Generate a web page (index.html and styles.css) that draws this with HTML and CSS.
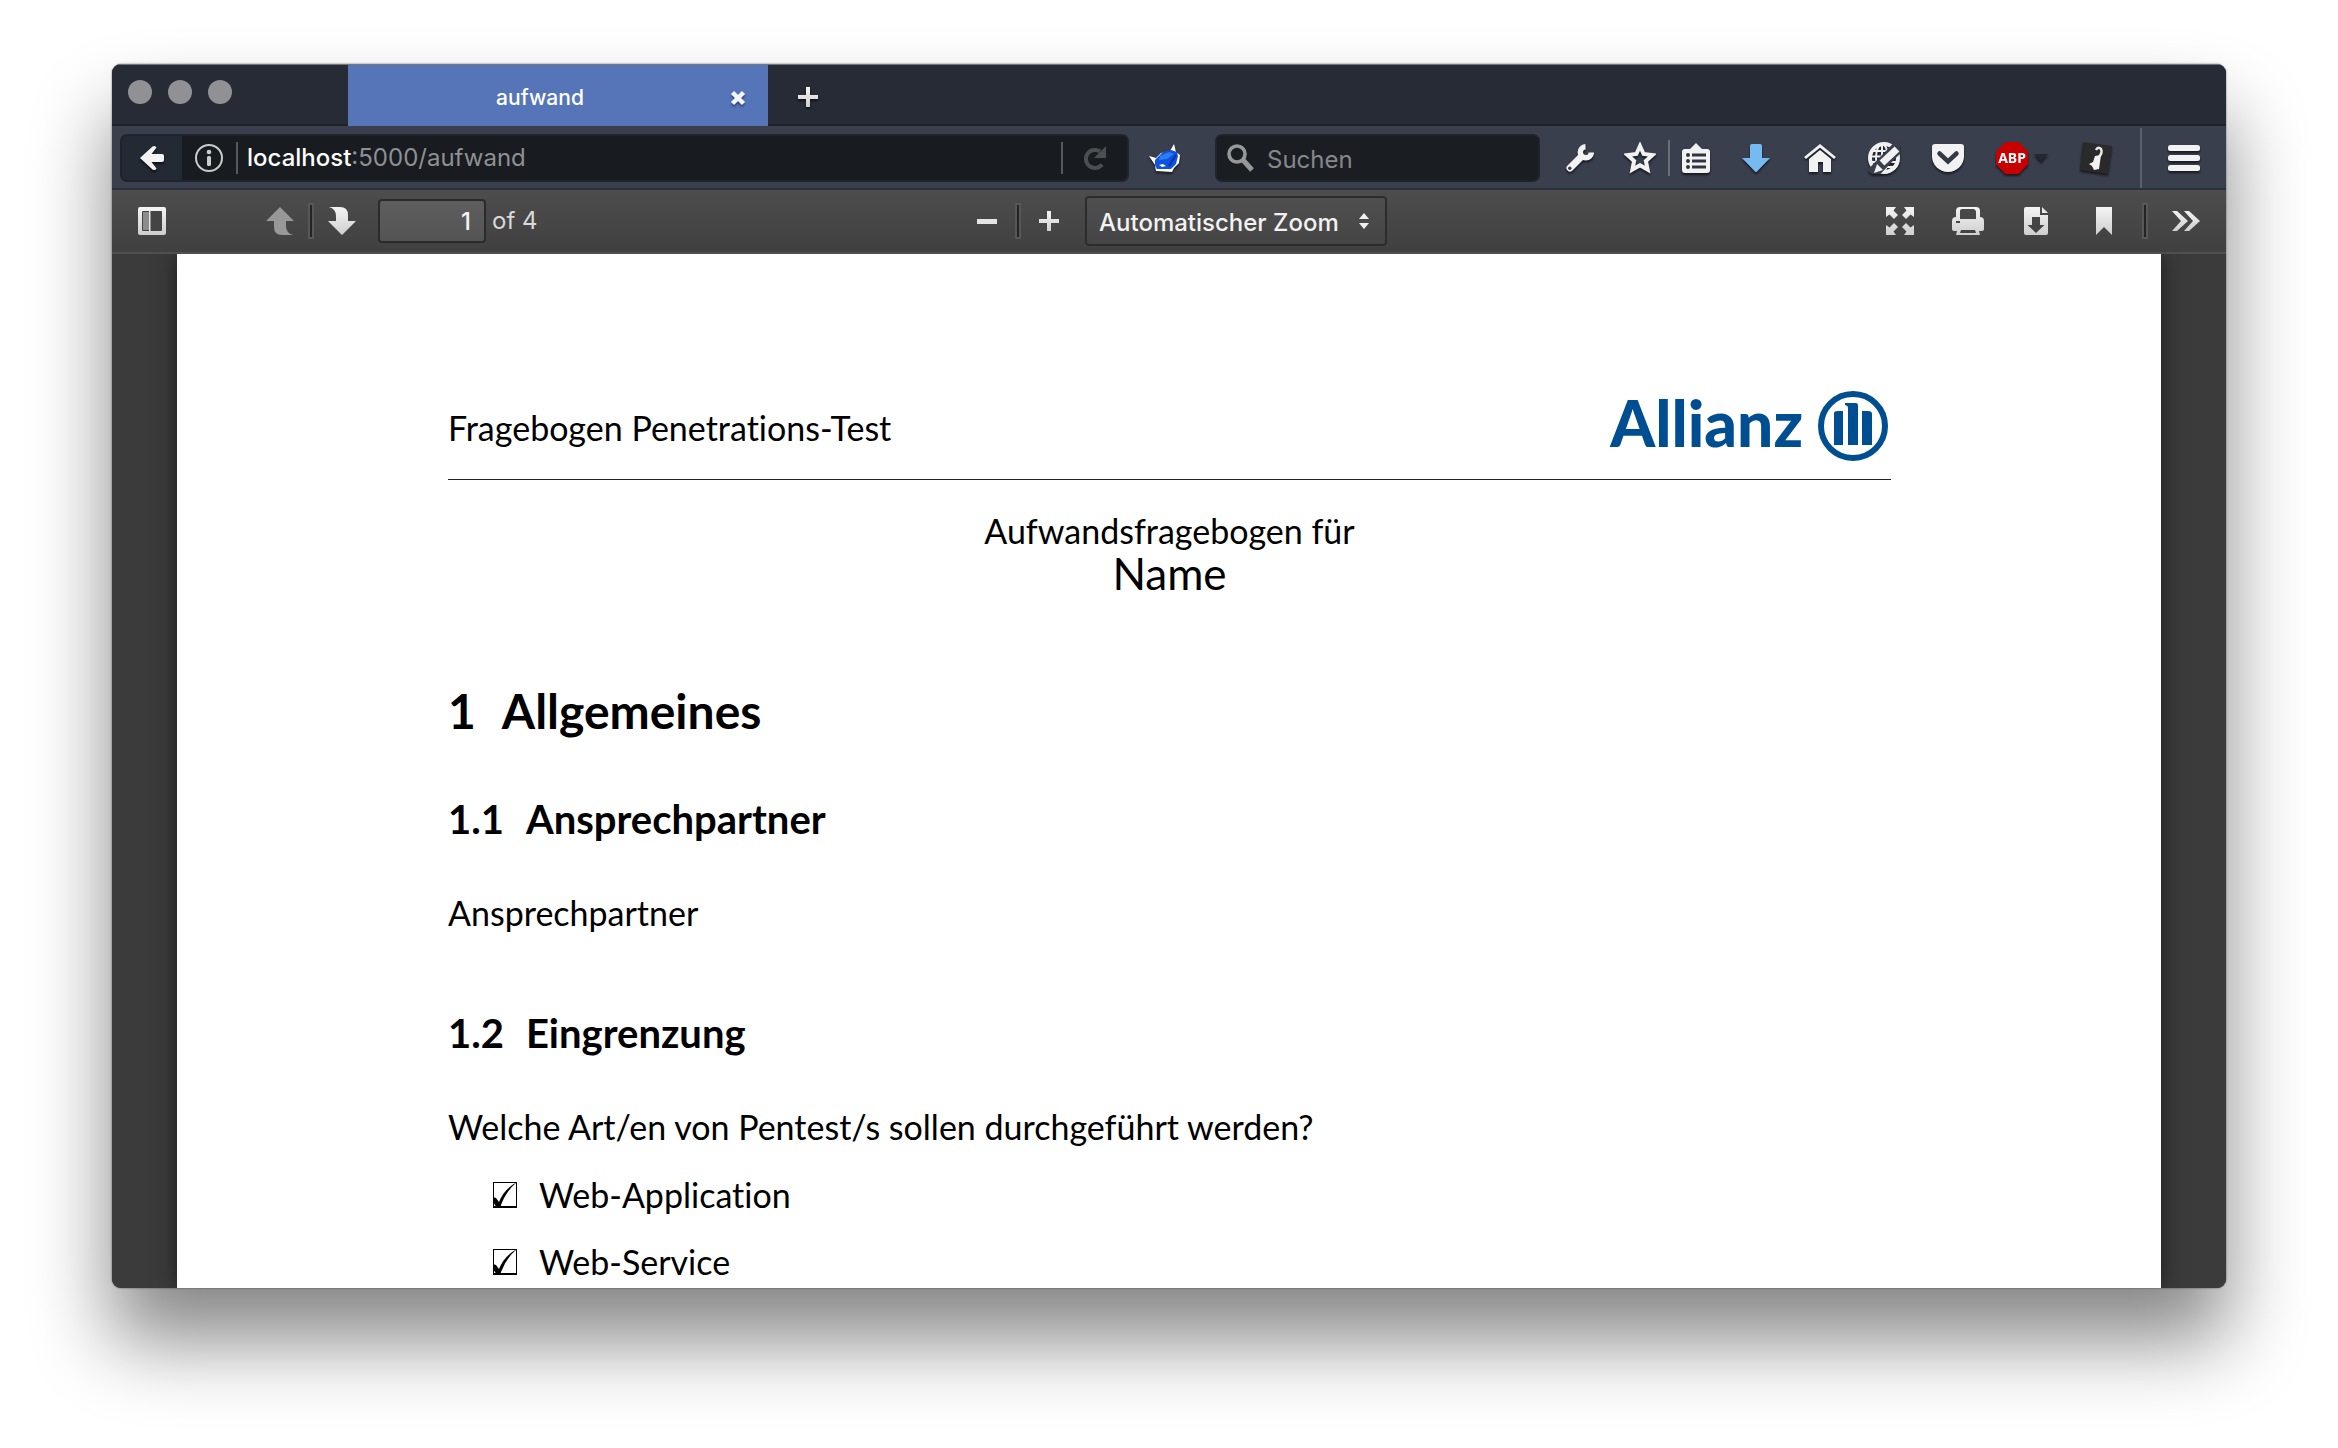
FILE: index.html
```html
<!DOCTYPE html>
<html lang="de">
<head>
<meta charset="utf-8">
<meta name="viewport" content="width=device-width, initial-scale=1">
<title>aufwand</title>
<link rel="stylesheet" href="styles.css">
</head>
<body>
<svg class="defs" width="0" height="0" aria-hidden="true">
  <defs>
    <linearGradient id="light" x1="0" y1="0" x2="0" y2="1"><stop offset="0" stop-color="#f4f4f4"/><stop offset="1" stop-color="#cfcfcf"/></linearGradient>
  </defs>
</svg>
<div class="window">
  <header class="tabbar">
    <div class="lights"><span class="light"></span><span class="light"></span><span class="light"></span></div>
    <div class="tab">
      <span class="tab-title">aufwand</span>
      <button class="tab-close" aria-label="Tab schließen"><svg width="16" height="16" viewBox="0 0 16 16"><path d="M2.500 2.500 13.500 13.500M13.500 2.500 2.500 13.500" stroke="#f4f6fb" stroke-width="4.500"/></svg></button>
    </div>
    <button class="tab-new" aria-label="Neuer Tab"><svg width="20" height="20" viewBox="0 0 20 20"><path d="M8 0h4v8h8v4h-8v8H8v-8H0V8h8z" fill="url(#light)"/></svg></button>
  </header>

  <nav class="navbar">
    <div class="urlbar">
      <button class="back" aria-label="Zurück"><svg width="24" height="26" viewBox="0 0 24 26"><path d="M12.500 1.500 Q15 0 16.500 2.500 L11.500 9 H22 Q24 9 24 11 V15 Q24 17 22 17 H11.500 L16.500 23.500 Q15 26 12.500 24.500 L0 13z" fill="#f3f3f3"/></svg></button>
      <button class="info" aria-label="Seiteninformationen"><svg width="28" height="28" viewBox="0 0 28 28"><circle cx="14" cy="14" r="13" fill="none" stroke="#c9cbcd" stroke-width="2"/><circle cx="14" cy="8" r="2.300" fill="#c9cbcd"/><rect x="12" y="12" width="4" height="10" rx="1.500" fill="#c9cbcd"/></svg></button>
      <a class="address" href="#dokument"><b>localhost</b>:5000/aufwand</a>
      <button class="reload" aria-label="Neu laden"><svg width="22" height="24" viewBox="0 0 22 24"><path d="M18 18.500A9 9 0 1 1 16 5.500" fill="none" stroke="#4c4f51" stroke-width="4"/><path d="M22 0V12H10z" fill="#4c4f51"/></svg></button>
    </div>
    <button class="tool whale" aria-label="Erweiterung"><svg width="32" height="28" viewBox="0 0 32 28"><path d="M0 12 7 14 12 9 21 7 25 0 27 8 31 11 30 19 25 24 23 28 7 27 6 21z" fill="#fff"/><path d="M6 16 14 8 22 6 28 8 29 12 27 20 22 25 8 25 6 21z" fill="#0d52e0"/><path d="M11 12 20 8 25 10 18 15 10 16z" fill="#2f7bf0"/><path d="M10 21 14 20 17 22 13 23z" fill="#fff"/><path d="M20 22 25 14 27 11" fill="none" stroke="#0a2f95" stroke-width="1.500"/></svg></button>
    <label class="search">
      <svg width="28" height="28" viewBox="0 0 28 28"><circle cx="10" cy="10" r="8" fill="none" stroke="#969899" stroke-width="3.600"/><path d="M16 16 25 26" stroke="#969899" stroke-width="5"/></svg>
      <input type="search" placeholder="Suchen" aria-label="Suchen">
    </label>
    <div class="tools">
      <button class="tool" aria-label="Entwicklerwerkzeuge"><svg width="28" height="28" viewBox="0 0 28 28"><path d="M4 24 15 13" stroke="#f2f2f2" stroke-width="7" stroke-linecap="round"/><path d="M19.500 2.800A5.500 5.500 0 1 0 25.300 8.500" fill="none" stroke="#f2f2f2" stroke-width="5.500"/><circle cx="3.800" cy="24.200" r="1.700" fill="#3a3f4e"/></svg></button>
      <button class="tool star" aria-label="Lesezeichen setzen"><svg width="32" height="32" viewBox="0 0 32 32"><path d="M16 4 19.600 12 28.400 13 21.900 18.900 23.600 27.500 16 23.200 8.400 27.500 10.100 18.900 3.600 13 12.400 12z" fill="none" stroke="#f2f2f2" stroke-width="4"/></svg></button>
      <button class="tool list" aria-label="Lesezeichen anzeigen"><svg width="28" height="30" viewBox="0 0 28 30"><path d="M14 0 20 6H25Q28 6 28 9V27Q28 30 25 30H3Q0 30 0 27V9Q0 6 3 6H8z" fill="#f2f2f2"/><g fill="#2f3442"><circle cx="6" cy="12" r="2"/><circle cx="6" cy="18" r="2"/><circle cx="6" cy="24" r="2"/><path d="M10 10.500h14v3H10zM10 16.500h14v3H10zM10 22.500h14v3H10z"/></g></svg></button>
      <button class="tool" aria-label="Downloads"><svg width="28" height="28" viewBox="0 0 28 28"><path d="M10 0h8q2 0 2 2v12h8L15 27.500q-1 1-2 0L0 14h8V2q0-2 2-2z" fill="#76baf2"/></svg></button>
      <button class="tool" aria-label="Startseite"><svg width="32" height="28" viewBox="0 0 32 28"><path d="M1 14 16 1.800 31 14" fill="none" stroke="#f2f2f2" stroke-width="2.800"/><path d="M5 15 16 6 27 15V28H19V18H14V28H5z" fill="#f2f2f2"/></svg></button>
      <button class="tool" aria-label="Webseite bearbeiten"><svg width="32" height="32" viewBox="0 0 32 32"><circle cx="16" cy="16" r="14" fill="none" stroke="#f0f0f0" stroke-width="4"/><g fill="none" stroke="#f0f0f0" stroke-width="2"><ellipse cx="14" cy="16" rx="6" ry="14"/><path d="M14 2V30M3 9H27M2 14.500H28M3 20H28M7 25H25"/></g><path d="M4 32 32 3" stroke="#3a3f4e" stroke-width="12"/><path d="M14 21 29 7" stroke="#f0f0f0" stroke-width="7"/><path d="M6 31 9 22 15 28z" fill="#f0f0f0"/><path d="M30 19A14 14 0 0 1 18 30" fill="none" stroke="#f0f0f0" stroke-width="3"/></svg></button>
      <button class="tool" aria-label="Pocket"><svg width="32" height="28" viewBox="0 0 32 28"><path d="M3 0H29Q32 0 32 3V12A16 16 0 0 1 0 12V3Q0 0 3 0z" fill="#f2f2f2"/><path d="M7.500 9.500 16 17.500 24.500 9.500" fill="none" stroke="#343948" stroke-width="4.500" stroke-linecap="round"/></svg></button>
      <button class="tool abp" aria-label="Adblock Plus"><svg width="32" height="32" viewBox="0 0 32 32"><path d="M9.500 0h13L32 9.500v13L22.500 32h-13L0 22.500v-13z" fill="#c80000"/><text class="abp-text" x="16" y="21" text-anchor="middle">ABP</text></svg><svg width="14" height="8" viewBox="0 0 14 8"><path d="M0 0h14L7 8z" fill="#232733"/></svg></button>
      <button class="tool" aria-label="Greasemonkey"><svg width="32" height="32" viewBox="0 0 32 32"><path d="M3 0 32 4 28 32 0 28z" fill="#2a2a2a"/><path d="M16 8Q18 4 21 7Q23 11 18 16" fill="none" stroke="#e8e8e8" stroke-width="2.500"/><path d="M15 14 21 13 20 20 19 27 14 28 12 24 9 22 13 20z" fill="#f2f2f2"/></svg></button>
      <button class="tool menu" aria-label="Menü"><svg width="32" height="26" viewBox="0 0 32 26"><g fill="#f2f2f2"><rect width="32" height="6" rx="2.500"/><rect y="10" width="32" height="6" rx="2.500"/><rect y="20" width="32" height="6" rx="2.500"/></g></svg></button>
    </div>
  </nav>

  <div class="pdfbar" role="toolbar">
    <div class="group">
      <button class="sidebar" aria-label="Seitenleiste"><svg width="28" height="28" viewBox="0 0 28 28"><rect width="28" height="28" rx="2" fill="url(#light)"/><rect x="4" y="4" width="20" height="20" rx="1" fill="#444"/><path d="M5 5h6v18H5z" fill="#8c8c8c"/><path d="M11 4h1.500v20H11z" fill="#e4e4e4"/></svg></button>
      <button class="step" aria-label="Vorherige Seite"><svg width="28" height="28" viewBox="0 0 28 28"><path d="M14 0 28 14H20V19Q20 26 27 28H16Q8 28 8 20V14H0z" fill="#989898"/></svg></button>
      <span class="split"></span>
      <button class="step" aria-label="Nächste Seite"><svg width="28" height="28" viewBox="0 0 28 28"><path d="M14 28 0 14H8V9Q8 2 1 0H12Q20 0 20 8V14H28z" fill="url(#light)"/></svg></button>
      <input class="page-number" type="text" value="1" aria-label="Seite">
      <span class="page-count">of 4</span>
    </div>
    <div class="group zoom">
      <button class="step" aria-label="Verkleinern"><svg width="20" height="20" viewBox="0 0 20 20"><path d="M0 8h20v5H0z" fill="#e4e4e4"/></svg></button>
      <span class="split"></span>
      <button class="step" aria-label="Vergrößern"><svg width="20" height="20" viewBox="0 0 20 20"><path d="M8 0h4v8h8v4h-8v8H8v-8H0V8h8z" fill="url(#light)"/></svg></button>
      <div class="scale">
        <select aria-label="Zoom"><option>Automatischer Zoom</option><option>Originalgröße</option><option>Seitenbreite</option></select>
        <svg width="10" height="16" viewBox="0 0 10 16"><path d="M0 6 5 0 10 6zM0 10 5 16 10 10z" fill="#f0f0f0"/></svg>
      </div>
    </div>
    <div class="group actions">
      <button class="action" aria-label="Präsentationsmodus"><svg width="28" height="28" viewBox="0 0 28 28"><path d="M0 0H10L7.500 3.500 12 8 8 12 3.500 7.500 0 10zM28 0H18L20.500 3.500 16 8 20 12 24.500 7.500 28 10zM0 28H10L7.500 24.500 12 20 8 16 3.500 20.500 0 18zM28 28H18L20.500 24.500 16 20 20 16 24.500 20.500 28 18z" fill="url(#light)"/></svg></button>
      <button class="action" aria-label="Drucken"><svg width="32" height="28" viewBox="0 0 32 28"><path fill-rule="evenodd" d="M8 0H24Q28 0 28 4V10Q32 10 32 14V22Q32 24 30 24H27L28 28H4L5 24H2Q0 24 0 22V14Q0 10 4 10V4Q4 0 8 0zM10 2Q8 2 8 4V12H24V4L22 2zM4 14v2h4v-2zM9 23 8 26H24L23 23z" fill="url(#light)"/></svg></button>
      <button class="action" aria-label="Herunterladen"><svg width="24" height="28" viewBox="0 0 24 28"><path d="M2 0H16V8H24V26Q24 28 22 28H2Q0 28 0 26V2Q0 0 2 0z" fill="url(#light)"/><path d="M18 0 24 6H18z" fill="#e8e8e8"/><path d="M8 10h8v8h4.500L12 26 3.500 18H8z" fill="#444"/></svg></button>
      <button class="action" aria-label="Aktuelle Ansicht"><svg width="16" height="28" viewBox="0 0 16 28"><path d="M0 0h16v28L8 20 0 28z" fill="url(#light)"/></svg></button>
      <span class="split"></span>
      <button class="more" aria-label="Werkzeuge"><svg width="28" height="20" viewBox="0 0 28 20"><path d="M0 0h5L16 10 5 20H0L9 10zM12 0h5L28 10 17 20H12L21 10z" fill="url(#light)"/></svg></button>
    </div>
  </div>

  <main class="viewer">
    <article class="paper" id="dokument">
      <header class="paper-head">
        <span class="paper-name">Fragebogen Penetrations-Test</span>
        <div class="logo">
          <span class="logo-text">Allianz</span>
          <svg width="70" height="70" viewBox="0 0 70 70"><circle cx="35" cy="35" r="32" fill="none" stroke="#004e92" stroke-width="6"/><path d="M16 22Q16 20 20 20H25V54H16zM27 12H38Q40 12 40 15V54H30V17Q30 14.500 27 14zM44 20H50Q54 20 54 23V54H44z" fill="#004e92"/></svg>
        </div>
      </header>
      <div class="cover">
        <p>Aufwandsfragebogen für</p>
        <p class="cover-name">Name</p>
      </div>
      <h1><span>1</span><span>Allgemeines</span></h1>
      <h2><span>1.1</span><span>Ansprechpartner</span></h2>
      <p class="body-text">Ansprechpartner</p>
      <h2 class="next"><span>1.2</span><span>Eingrenzung</span></h2>
      <p class="body-text">Welche Art/en von Pentest/s sollen durchgeführt werden?</p>
      <ul class="checks">
        <li><label><span class="box"><input type="checkbox" checked><svg width="24" height="26" viewBox="0 0 24 26"><path d="M0 15 3 16 6 20Q11 7 24 0Q12 10 7 26H4L0 20z" fill="#000"/></svg></span>Web-Application</label></li>
        <li><label><span class="box"><input type="checkbox" checked><svg width="24" height="26" viewBox="0 0 24 26"><path d="M0 15 3 16 6 20Q11 7 24 0Q12 10 7 26H4L0 20z" fill="#000"/></svg></span>Web-Service</label></li>
      </ul>
    </article>
  </main>
</div>
</body>
</html>
```
FILE: styles.css
```css
* { box-sizing: border-box; }

body {
  display: flex;
  min-height: 100vh;
  margin: 0;
  padding: 64px 112px 160px;
  background: #fff;
  font-family: Inter, "Liberation Sans", sans-serif;
  font-size: 24px;
}

.defs { position: absolute; }

button {
  display: flex;
  align-items: center;
  justify-content: center;
  flex: none;
  margin: 0;
  padding: 0;
  border: 0;
  background: none;
}

svg { display: block; flex: none; }
p, h1, h2, ul { margin: 0; padding: 0; }

.window {
  display: flex;
  flex-direction: column;
  flex: 1;
  min-width: 0;
  overflow: hidden;
  border-radius: 9px;
  background: #3b3b3b;
  box-shadow: 0 52px 80px rgba(0, 0, 0, .48), 0 0 2px rgba(0, 0, 0, .6);
}

/* Tab strip */
.tabbar {
  display: flex;
  height: 62px;
  border-top: 1px solid #6f7782;
  background: linear-gradient(#272b35 59px, #1d212b 59px);
}
.lights {
  display: flex;
  gap: 16px;
  width: 236px;
  padding: 15px 16px;
}
.light {
  width: 24px;
  height: 24px;
  border-radius: 50%;
  background: #919095;
}
.tab {
  display: grid;
  grid-template-columns: 60px 1fr 60px;
  align-items: center;
  width: 420px;
  padding-top: 4px;
  background: #5675b9;
}
.tab-title {
  grid-column: 2;
  padding-right: 36px;
  color: #fff;
  font-size: 21px;
  font-weight: 500;
  line-height: 28px;
  text-align: center;
}
.tab-close svg { filter: drop-shadow(0 2px 1px rgba(20, 30, 70, .6)); }
.tab-new { width: 80px; padding-top: 2px; }
.tab-new svg, .tool svg, .back svg { filter: drop-shadow(0 2px 1px rgba(0, 0, 0, .6)); }

/* Navigation bar */
.navbar {
  display: flex;
  align-items: center;
  height: 64px;
  padding: 2px 0 0 8px;
  border-bottom: 2px solid #2c303d;
  background: #3a3f4e;
}
.urlbar, .search {
  display: flex;
  align-items: center;
  height: 48px;
  border: 2px solid #1f242c;
  border-radius: 7px;
  background: #181b1f;
}
.urlbar { flex: 1; min-width: 0; overflow: hidden; }
.back {
  align-self: stretch;
  width: 60px;
  background: #242a33;
}
.info { width: 54px; }
.address {
  flex: 1;
  padding-left: 9px;
  border-left: 2px solid #55595f;
  border-right: 2px solid #55595f;
  color: #8e9194;
  line-height: 32px;
  text-decoration: none;
}
.address b { color: #fff; font-weight: 500; }
.reload { width: 64px; }
.search {
  gap: 12px;
  width: 325px;
  padding: 0 10px;
  background: #1a1e22;
}
.search input {
  flex: 1;
  min-width: 0;
  padding: 2px 0 0;
  border: 0;
  outline: 0;
  background: none;
  color: #fff;
  font: inherit;
}
.search input::placeholder { color: #85888b; opacity: 1; }
.tools {
  display: flex;
  align-self: stretch;
  padding-left: 8px;
}
.tool { width: 64px; }
.whale { width: 72px; margin-right: 14px; }
.star { width: 56px; }
.list {
  width: 56px;
  height: 36px;
  align-self: center;
  padding-right: 2px;
  border-left: 2px solid #6a6e79;
}
.abp { gap: 6px; width: 84px; }
.abp-text {
  fill: #fff;
  font-family: "Noto Sans", sans-serif;
  font-size: 14px;
  font-weight: 700;
}
.menu {
  width: 86px;
  margin-left: 12px;
  border-left: 2px solid #5b606d;
}

/* PDF toolbar */
.pdfbar {
  display: grid;
  grid-template-columns: 1fr auto 1fr;
  align-items: center;
  height: 64px;
  border-bottom: 2px solid #4f4f4f;
  background: linear-gradient(#4d4d4d, #404040);
}
.group { display: flex; align-items: center; }
.sidebar { width: 64px; margin: 0 72px 0 8px; }
.step { width: 48px; height: 48px; }
.split {
  width: 6px;
  height: 36px;
  margin: 0 4px;
  border: 2px solid #575757;
  background: #242424;
}
.page-number {
  width: 108px;
  height: 44px;
  margin: 0 6px 0 12px;
  padding: 0 13px;
  border: 2px solid #2b2b2b;
  border-radius: 4px;
  background: linear-gradient(#5e5e5e, #545454);
  color: #f2f2f2;
  font: 500 24px Inter, sans-serif;
  text-align: right;
}
.page-count { color: #d9d9d9; line-height: 32px; }
.zoom { padding-left: 12px; }
.scale { display: grid; align-items: center; margin-left: 12px; }
.scale select, .scale svg { grid-area: 1 / 1; }
.scale select {
  appearance: none;
  width: 302px;
  height: 50px;
  padding: 2px 12px 0;
  border: 2px solid #2c2c2c;
  border-radius: 4px;
  background: linear-gradient(#4f4f4f, #454545);
  color: #f2f2f2;
  font: 500 24px Inter, sans-serif;
}
.scale svg { justify-self: end; margin-right: 18px; pointer-events: none; }
.actions { justify-content: flex-end; padding-right: 2px; }
.action { width: 68px; }
.actions .split { margin-right: 0; }
.more { width: 76px; }

/* Document */
.viewer {
  flex: 1;
  padding: 0 65px;
  overflow: hidden;
  background: #3b3b3b;
}
.paper {
  min-height: 100%;
  padding: 137px 270px 6px 271px;
  background: #fff;
  box-shadow: 0 0 20px #1c1c1c;
  color: #000;
  font-family: Lato, "Open Sans", sans-serif;
  font-size: 34px;
  font-variant-ligatures: none;
  line-height: 40px;
}
.paper-head {
  display: flex;
  align-items: center;
  justify-content: space-between;
  padding-bottom: 18px;
  border-bottom: 1px solid #222;
}
.paper-name { padding-top: 4px; }
.logo {
  display: flex;
  gap: 15px;
  padding-right: 3px;
}
.logo-text {
  color: #004e92;
  font-size: 64px;
  font-weight: 900;
  line-height: 64px;
}
.cover { padding-top: 31px; text-align: center; }
.cover-name { font-size: 44px; line-height: 44px; }
h1, h2 { display: flex; font-weight: 700; }
h1 { gap: 26px; margin-top: 88px; font-size: 48px; line-height: 56px; }
h2 { gap: 22px; margin-top: 56px; font-size: 40px; line-height: 48px; }
.next { margin-top: 76px; }
.body-text { margin-top: 50px; }
.checks {
  display: flex;
  flex-direction: column;
  gap: 27px;
  margin-top: 28px;
  padding-left: 45px;
  list-style: none;
}
.checks label { display: flex; align-items: center; gap: 22px; }
.box { display: grid; }
.box input, .box svg { grid-area: 1 / 1; }
.box input {
  appearance: none;
  width: 24px;
  height: 26px;
  margin: 0;
  border: 1px solid #000;
  border-bottom-width: 2px;
}
.box svg { pointer-events: none; }
.box input:not(:checked) + svg { visibility: hidden; }
```
